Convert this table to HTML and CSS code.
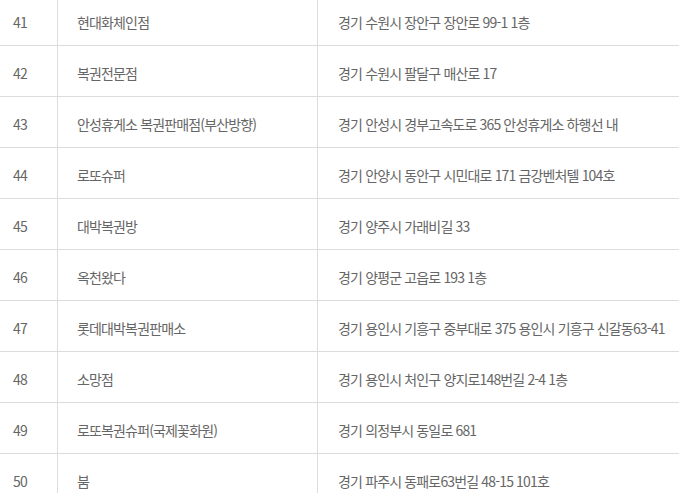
FILE: index.html
```html
<!DOCTYPE html>
<html lang="ko">
<head>
<meta charset="utf-8">
<link rel="stylesheet" href="styles.css">
</head>
<body>
<div class="list">
  <div class="row"><div class="cell num">41</div><div class="cell name">현대화체인점</div><div class="cell addr">경기 수원시 장안구 장안로 99-1 1층</div></div>
  <div class="row"><div class="cell num">42</div><div class="cell name">복권전문점</div><div class="cell addr">경기 수원시 팔달구 매산로 17</div></div>
  <div class="row"><div class="cell num">43</div><div class="cell name">안성휴게소 복권판매점(부산방향)</div><div class="cell addr">경기 안성시 경부고속도로 365 안성휴게소 하행선 내</div></div>
  <div class="row"><div class="cell num">44</div><div class="cell name">로또슈퍼</div><div class="cell addr">경기 안양시 동안구 시민대로 171 금강벤처텔 104호</div></div>
  <div class="row"><div class="cell num">45</div><div class="cell name">대박복권방</div><div class="cell addr">경기 양주시 가래비길 33</div></div>
  <div class="row"><div class="cell num">46</div><div class="cell name">옥천왔다</div><div class="cell addr">경기 양평군 고읍로 193 1층</div></div>
  <div class="row"><div class="cell num">47</div><div class="cell name">롯데대박복권판매소</div><div class="cell addr">경기 용인시 기흥구 중부대로 375 용인시 기흥구 신갈동63-41</div></div>
  <div class="row"><div class="cell num">48</div><div class="cell name">소망점</div><div class="cell addr">경기 용인시 처인구 양지로148번길 2-4 1층</div></div>
  <div class="row"><div class="cell num">49</div><div class="cell name">로또복권슈퍼(국제꽃화원)</div><div class="cell addr">경기 의정부시 동일로 681</div></div>
  <div class="row"><div class="cell num">50</div><div class="cell name">붐</div><div class="cell addr">경기 파주시 동패로63번길 48-15 101호</div></div>
</div>
</body>
</html>
```
FILE: styles.css
```css
html, body {
  margin: 0;
  padding: 0;
  background: #fff;
  overflow: hidden;
}
.list {
  margin-top: -5px;
  width: 700px;
  font-family: "Noto Sans CJK KR", "Noto Sans", sans-serif;
  font-size: 14px;
  letter-spacing: -0.85px;
  color: #666;
}
.row {
  display: grid;
  grid-template-columns: 58px 260px 1fr;
  height: 51px;
  box-sizing: border-box;
  border-bottom: 1px solid #dcdcdc;
}
.cell {
  display: flex;
  align-items: center;
  padding-top: 3px;
  white-space: nowrap;
}
.num {
  padding-left: 13px;
  border-right: 1px solid #dcdcdc;
}
.name {
  padding-left: 19px;
  border-right: 1px solid #dcdcdc;
}
.addr {
  padding-left: 20px;
}
```
